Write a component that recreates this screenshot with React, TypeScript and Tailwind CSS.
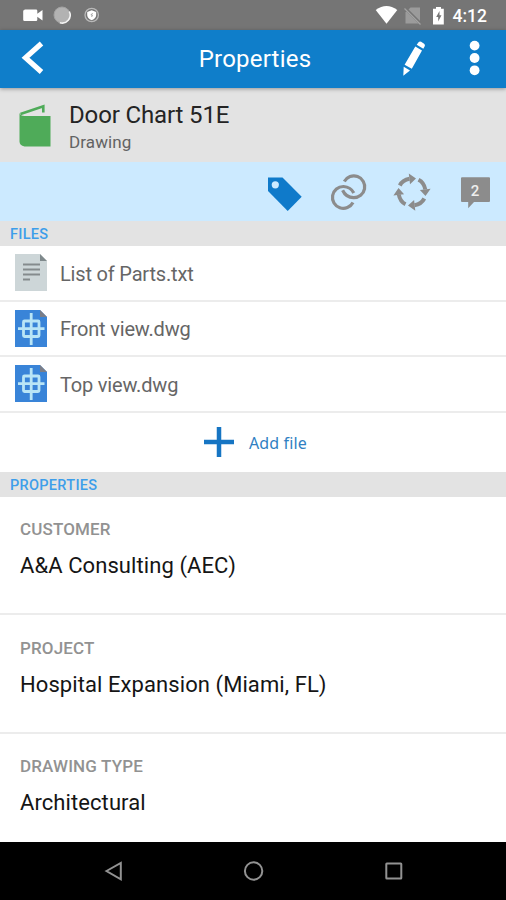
import type { ReactNode } from "react"

const files = [
    { name: "List of Parts.txt", kind: "txt" },
    { name: "Front view.dwg", kind: "dwg" },
    { name: "Top view.dwg", kind: "dwg" },
]

const properties = [
    { label: "CUSTOMER", value: "A&A Consulting (AEC)" },
    { label: "PROJECT", value: "Hospital Expansion (Miami, FL)" },
    { label: "DRAWING TYPE", value: "Architectural" },
]

function StatusBar() {
    return (
        <div className="flex h-[30px] shrink-0 items-center justify-between bg-[#757575] text-white">
            <svg width="120" height="30" viewBox="0 0 120 30" fill="currentColor">
                <path d="M24.5 9.5h11.5q1.3 0 1.3 1.3v3l5.2-3.8v10.5l-5.2-3.8v3q0 1.3-1.3 1.3H24.5q-1.3 0-1.3-1.3v-8.4q0-1.3 1.3-1.3z" />
                <circle cx="62" cy="15" r="8" fill="#b2b2b2" stroke="#a2a2a2" strokeWidth="1" />
                <path d="M69.3 11.5a8 8 0 0 1-9.5 11.2" fill="none" stroke="#f4f4f4" strokeWidth="1.6" />
                <circle cx="91.7" cy="15" r="6.7" fill="none" stroke="#b9b9b9" strokeWidth="1.3" />
                <path d="M91.7 10.3l4.5 1.6v3q0 3.4-4.5 5.4q-4.5-2-4.5-5.4v-3z" />
                <path d="M92.7 13l-1.8 2h1.6l-.9 2" fill="none" stroke="#959595" strokeWidth=".8" />
            </svg>
            <div className="flex items-center pr-[19px]">
                <svg width="80" height="30" viewBox="370 0 80 30" fill="currentColor">
                    <path d="M375.7 10q10.8-8 21.6 0L386.5 23.7z" />
                    <path d="M410.5 7.5H420v16h-14.5v-11z" fill="#9b9b9b" />
                    <path d="M404.5 7.5L421 24" fill="none" stroke="#757575" strokeWidth="3" />
                    <path d="M404.5 8.5L420.5 24.5" fill="none" stroke="#a3a3a3" strokeWidth="1.3" />
                    <path d="M436 7h5v1.8h2.8v15.7H433V8.8h3z" />
                    <path d="M439.5 11l-3.3 6h2v4.5l3.3-6.2h-2z" fill="#757575" />
                </svg>
                <span className="ml-[3px] pt-px text-[17.5px] font-medium leading-[30px]">4:12</span>
            </div>
        </div>
    )
}

function AppBar() {
    return (
        <header className="relative z-10 flex h-[58px] shrink-0 items-center justify-between bg-[#0f7eca] text-white shadow-[0_1px_4px_rgba(0,0,0,0.35)]">
            <svg width="120" height="58" viewBox="0 30 120 58" fill="none">
                <path d="M41.5 43.5L25.5 57.8L41.5 72" stroke="currentColor" strokeWidth="5.2" />
            </svg>
            <h1 className="text-2xl tracking-[0.2px]">Properties</h1>
            <svg width="116" height="58" viewBox="390 30 116 58" fill="currentColor">
                <path d="M417.8 43.2q1.3-2.4 3.3-1.4l3 1.9q1.5 1 .5 2.8l-1.3 2.2-6.6-3.9z" />
                <path d="M415.3 46.6l6.7 4-10.2 18.2-7.2-4.1zM403.7 66.8l6.3 3.6-6.7 5.4z" />
                <circle cx="474.6" cy="45.6" r="4.9" />
                <circle cx="474.6" cy="58" r="4.9" />
                <circle cx="474.6" cy="70.3" r="4.9" />
            </svg>
        </header>
    )
}

function ObjectHeader() {
    return (
        <div className="flex h-[74px] shrink-0 bg-[#e3e3e3]">
            <svg width="69" height="74" viewBox="0 88 69 74">
                <path d="M20.5 114L43.3 106.2V112.5" fill="none" stroke="#4fab59" strokeWidth="2.6" />
                <path d="M19.5 113q1 3 5 3H50.5v30.5H24.5q-5-1-5-5z" fill="#4fab59" />
            </svg>
            <div className="pt-[13px]">
                <div className="text-2xl leading-7 tracking-[-0.14px] text-[#242424]">Door Chart 51E</div>
                <div className="mt-[3px] text-[17px] leading-5 tracking-[0.1px] text-[#626262]">Drawing</div>
            </div>
        </div>
    )
}

function ActionBar() {
    return (
        <div className="flex h-[59px] shrink-0 justify-end bg-[#cceaff]">
            <svg width="256" height="59" viewBox="250 162 256 59" fill="none">
                <path d="M268 177.5h14.500l19.200 19.200-14 14.300L268 191z" fill="#0f7aca" />
                <circle cx="275.3" cy="184.8" r="3.6" fill="#cceaff" />
                {/* interlocked rings */}
                <g stroke="#8c8c8c" strokeWidth="3.2">
                    <path d="M344.3 181.5A10.9 10.9 0 1 1 353.5 197.7Q346 197.500 342.600 190.200" />
                    <path d="M353 202.5A10.9 10.9 0 1 1 343.500 186.500Q350.800 187 353.800 193" />
                </g>
                {/* workflow cycle */}
                <g stroke="#8c8c8c" strokeWidth="4">
                    <path d="M399.8 185.500Q402.500 180 409.500 178.800" />
                    <path d="M418.5 179.800Q424 182.500 425.300 189.500" />
                    <path d="M424.3 198.500Q421.500 204 414.500 205.200" />
                    <path d="M405.5 204.300Q400 201.500 398.800 194.500" />
                </g>
                <path
                    d="M408.8 173.5l7.2 5-6 5.7zM430.6 188.7l-5.1 7.2-5.6-6zM415.3 210.7l-7.3-5.1 6.1-5.6zM393.4 195.4l5.1-7.3 5.6 6.1z"
                    fill="#8c8c8c"
                />
                <path d="M462 177.3h27q1 0 1 1v22.6q0 1-1 1H474l-5.800 6.300v-6.300H462q-1 0-1-1v-22.600q0-1 1-1z" fill="#8c8c8c" />
                <text x="475" y="195.5" textAnchor="middle" fill="#eeeeee" fontSize="15" fontWeight="500">2</text>
            </svg>
        </div>
    )
}

function SectionTitle({ children }: { children: ReactNode }) {
    return (
        <div className="h-[25px] shrink-0 bg-[#e3e3e3] pl-2.5 pt-px text-[14.5px] font-medium leading-[26px] tracking-[0.3px] text-[#3d9eea]">
            {children}
        </div>
    )
}

function FileIcon({ kind }: { kind: string }) {
    if (kind === "txt") {
        return (
            <svg width="32" height="37" viewBox="0 0 32 37" fill="none">
                <path d="M0 0h25l7 7v30H0z" fill="#cdd6d8" />
                <path d="M25 0l7 7h-7z" fill="#7f898c" />
                <path d="M8 10.5h17M8 15.5h17M8 20.5h17M8 25.5h7" stroke="#858b8d" strokeWidth="2" />
            </svg>
        )
    }
    return (
        <svg width="32" height="37" viewBox="0 0 32 37" fill="none">
            <path d="M0 0h25l7 7v30H0z" fill="#3984d8" />
            <path d="M25 0l7 7h-7z" fill="#7b7e88" />
            <g stroke="#b9e5f6" strokeWidth="2.8">
                <rect x="8.5" y="11" width="15.5" height="15.5" rx="1" />
                <path d="M16.2 3v32M3 18.7h26.5" />
            </g>
        </svg>
    )
}

export default function App() {
    return (
        <div className="flex h-[900px] w-[506px] flex-col overflow-hidden bg-white font-[Roboto,sans-serif]">
            <StatusBar />
            <AppBar />
            <ObjectHeader />
            <ActionBar />

            <SectionTitle>FILES</SectionTitle>
            {files.map((file) => (
                <div key={file.name} className="flex h-[55.5px] shrink-0 items-center border-b-2 border-[#ececec] pl-[15px]">
                    <FileIcon kind={file.kind} />
                    <span className="ml-[13px] pt-[2px] text-xl tracking-[-0.18px] text-[#666666]">{file.name}</span>
                </div>
            ))}
            <div className="flex h-[59px] shrink-0 items-center pl-[204px]">
                <svg width="30" height="30" viewBox="0 0 30 30">
                    <path d="M15 0v30M0 15h30" stroke="#1675c3" strokeWidth="4.5" />
                </svg>
                <span className="ml-[15px] pt-px font-['Noto_Sans',sans-serif] text-base tracking-[0.12px] text-[#307fc2]">Add file</span>
            </div>

            <SectionTitle>PROPERTIES</SectionTitle>
            <div className="h-[345.5px] shrink-0">
                {properties.map((property) => (
                    <div key={property.label} className="h-[118.5px] border-b-2 border-[#ececec] pl-5 pt-[22.5px] last:h-[108px] last:border-b-0">
                        <div className="text-[17px] font-medium leading-5 tracking-[0.15px] text-[#929292]">{property.label}</div>
                        <div className="mt-[13px] text-[22px] leading-7 tracking-[0.08px] text-[#151515]">{property.value}</div>
                    </div>
                ))}
            </div>

            <nav className="flex h-[58px] shrink-0 bg-black">
                <svg width="506" height="58" viewBox="0 842 506 58" fill="none" stroke="#929292" strokeWidth="2">
                    <path d="M106.5 871L120.8 863V879.3z" />
                    <circle cx="253.6" cy="871" r="8.7" />
                    <rect x="386.3" y="863.5" width="15" height="15" rx=".5" />
                </svg>
            </nav>
        </div>
    )
}
